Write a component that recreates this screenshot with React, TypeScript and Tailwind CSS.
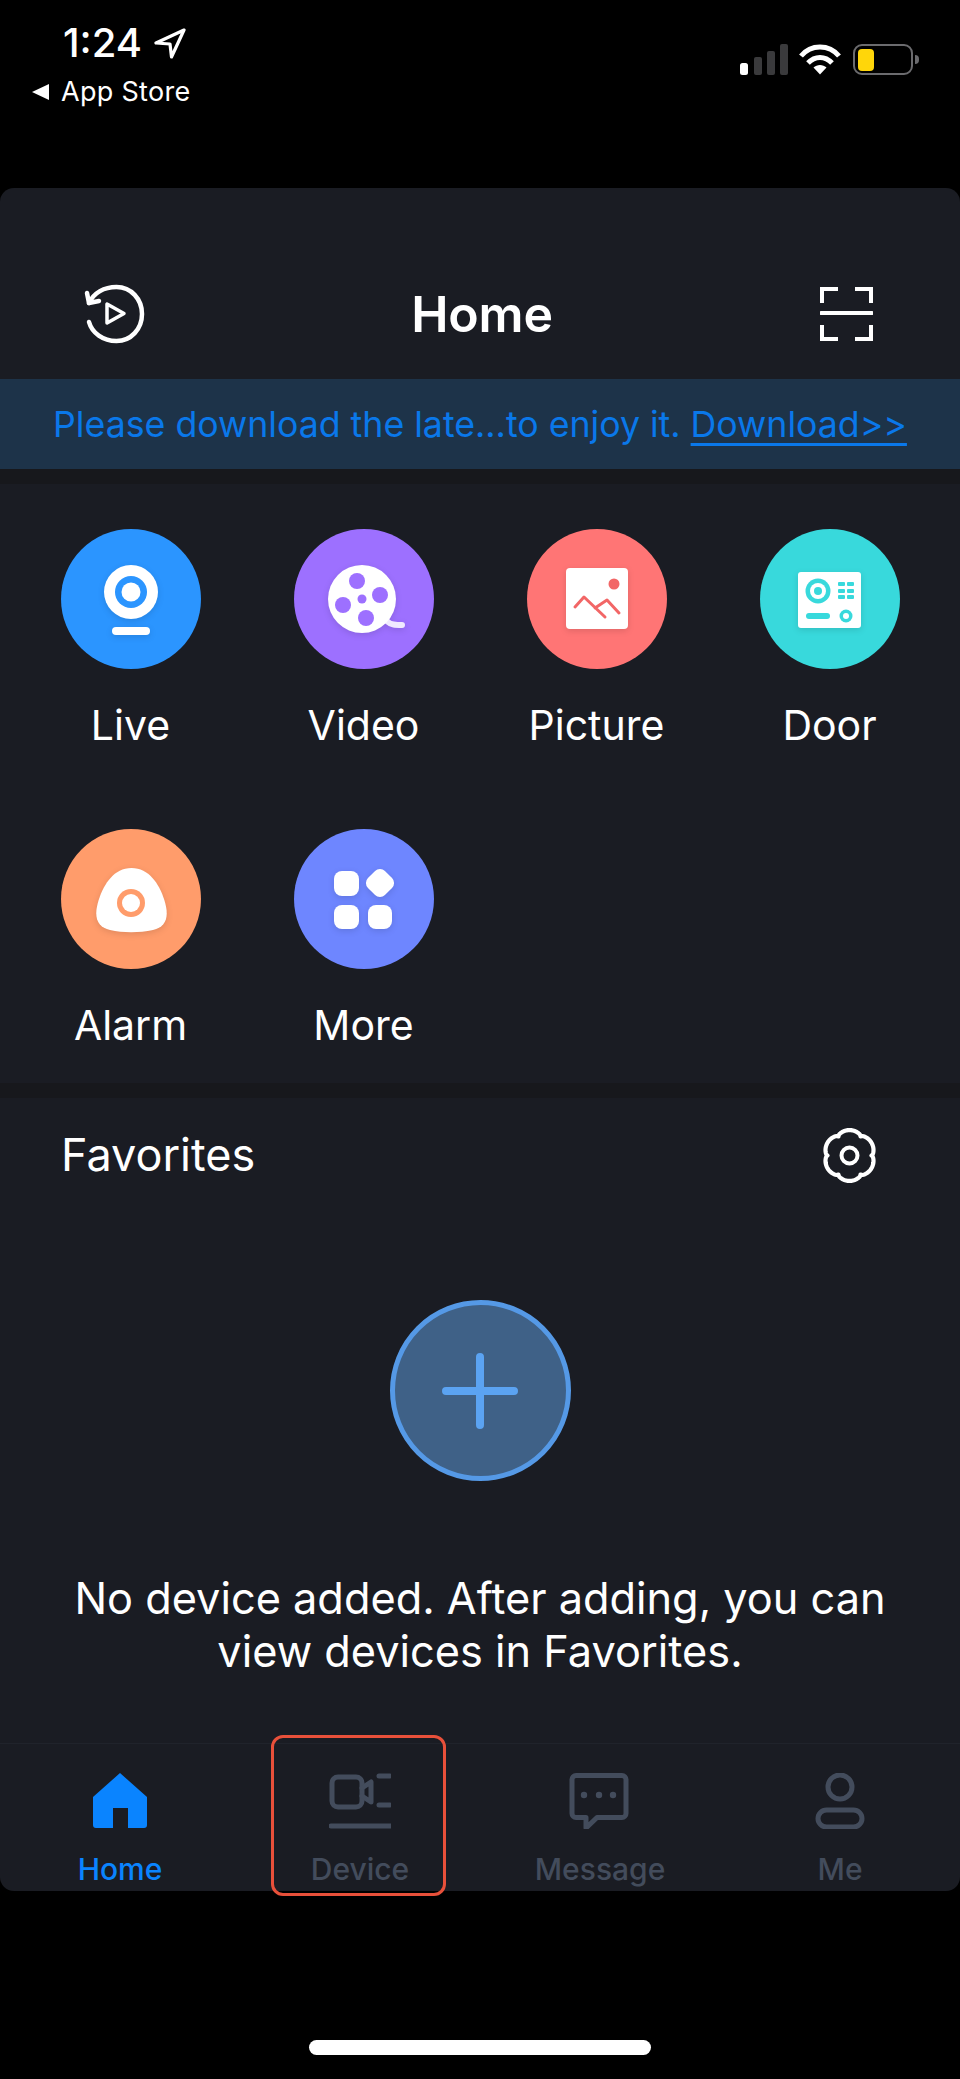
import type { ReactNode } from 'react';

const gearPath = () => {
    const pts: string[] = [];
    for (let i = 0; i < 180; i++) {
        const a = (i / 180) * Math.PI * 2;
        const r = 22 + 3.400 * Math.pow(Math.abs(Math.sin(3 * a)), 0.55);
        pts.push(`${(27.5 + r * Math.cos(a)).toFixed(2)},${(27.5 + r * Math.sin(a)).toFixed(2)}`);
    }
    return `M${pts.join('L')}Z`;
};

function StatusBar() {
    return (
        <div className="h-[188px] flex justify-between items-start text-white">
            <div className="pt-[19px] pl-[32px]">
                <div className="flex items-center pl-[31px] h-[48px]">
                    <span className="text-[40px] font-medium leading-[48px]">1:24</span>
                    <svg width="32" height="31" viewBox="0 0 32 31" className="ml-[12px]" fill="none" stroke="white" strokeWidth="3.200" strokeLinejoin="round">
                        <path d="M30 2 2 15l14 1 1.500 13z" />
                    </svg>
                </div>
                <div className="flex items-center h-[34px] mt-[8px]">
                    <svg width="17" height="16" viewBox="0 0 17 16" fill="white"><path d="M17 0v16L0 8z" /></svg>
                    <span className="ml-[12px] text-[27px] leading-[34px] tracking-[0.3px]">App Store</span>
                </div>
            </div>
            <div className="flex items-start pt-[44px] pr-[41px]">
                <svg width="48" height="31" viewBox="0 0 48 31">
                    <rect x="0" y="19" width="8" height="12" rx="2.500" fill="white" />
                    <rect x="14" y="13" width="8" height="18" rx="2" fill="#3a3a3c" />
                    <rect x="27" y="7" width="8" height="24" rx="2" fill="#3a3a3c" />
                    <rect x="40" y="0" width="8" height="31" rx="2" fill="#3a3a3c" />
                </svg>
                <svg width="42" height="31" viewBox="0 0 42 31" className="ml-[11px]" fill="none" stroke="white" strokeWidth="5">
                    <path d="M2 12C12 0 30 0 40 12" />
                    <path d="M9 19C16 11.500 26 11.500 33 19" />
                    <path d="M21 30.500l-6.500-7c3.500-3.500 9.500-3.500 13 0z" fill="white" stroke="none" />
                </svg>
                <div className="flex items-center ml-[12px]">
                    <div className="w-[60px] h-[31px] rounded-[9px] border-[2.500px] border-[#6b6b6e] p-[2.500px]">
                        <div className="w-[16px] h-full rounded-[4px] bg-[#ffd60a]" />
                    </div>
                    <div className="ml-[2px] w-[4px] h-[9px] rounded-r-full bg-[#6b6b6e]" />
                </div>
            </div>
        </div>
    );
}

function Header() {
    return (
        <div className="h-[191px] flex items-end justify-between pl-[86px] pr-[87px] pb-[36px]">
            <svg width="58" height="58" viewBox="0 0 58 58" fill="none" stroke="white" strokeWidth="4.500" strokeLinecap="round" strokeLinejoin="round" className="overflow-visible">
                <path d="M3 18C8 8 18 2 30.500 2c14.500 0 25.500 12 25.500 27S45 56 30.500 56C17 56 6 48 3 37" />
                <path d="M1 8l2 10 10-2" />
                <path d="M21 19v19l17-9.500z" strokeWidth="3.500" />
            </svg>
            <span className="text-[50px] font-semibold leading-[56px] text-white mb-[1px] tracking-[-0.2px]">Home</span>
            <svg width="53" height="54" viewBox="0 0 53 54" fill="none" stroke="white" strokeWidth="4" className="mb-[2px]">
                <path d="M2 16V2h16M35 2h16v14M2 38v14h16M51 38v14H35" />
                <path d="M1 26h51" strokeLinecap="round" />
            </svg>
        </div>
    );
}

function Banner() {
    return (
        <div className="h-[90px] bg-[#1d3349] flex items-center justify-center text-[#0a78ea] text-[35.700px] leading-[44px] whitespace-nowrap">
            <span>Please download the late...to enjoy it.&nbsp;</span>
            <span className="underline underline-offset-[6px] decoration-[3px]">Download&gt;&gt;</span>
        </div>
    );
}

type Tile = { label: string; color: string; icon: ReactNode };

const tiles: Tile[] = [
    {
        label: 'Live',
        color: 'bg-[#2b95ff]',
        icon: (
            <>
                <circle cx="70" cy="63" r="27" fill="white" />
                <circle cx="70" cy="63" r="16" fill="#2b95ff" />
                <circle cx="70" cy="63" r="9.500" fill="white" />
                <rect x="51" y="98" width="38" height="8" rx="4" fill="white" />
            </>
        ),
    },
    {
        label: 'Video',
        color: 'bg-[#9d70ff]',
        icon: (
            <>
                <path d="M94 93c3 3 7 3 14 3" stroke="#f0eaff" strokeWidth="6" strokeLinecap="round" fill="none" />
                <circle cx="68" cy="70" r="34" fill="white" />
                <circle cx="63" cy="52" r="8" fill="#9d70ff" />
                <circle cx="86" cy="66" r="8" fill="#9d70ff" />
                <circle cx="49" cy="76" r="8" fill="#9d70ff" />
                <circle cx="72" cy="89" r="8" fill="#9d70ff" />
                <circle cx="68" cy="70" r="4.500" fill="#9d70ff" />
            </>
        ),
    },
    {
        label: 'Picture',
        color: 'bg-[#ff7575]',
        icon: (
            <>
                <rect x="39" y="39" width="62" height="61" rx="4" fill="white" />
                <circle cx="87" cy="55" r="5.500" fill="#f26666" />
                <path d="M48 78l9-10 21 20M68 79l12-8 12 13" stroke="#f26666" strokeWidth="3" strokeLinecap="round" strokeLinejoin="round" fill="none" />
            </>
        ),
    },
    {
        label: 'Door',
        color: 'bg-[#38d9dc]',
        icon: (
            <>
                <rect x="38" y="43" width="63" height="56" rx="3" fill="white" />
                <circle cx="58" cy="62" r="12.500" fill="#38d9dc" />
                <circle cx="58" cy="62" r="8" fill="white" />
                <circle cx="58" cy="62" r="4" fill="#38d9dc" />
                <rect x="78" y="53" width="7" height="4" rx="1" fill="#38d9dc" />
                <rect x="87" y="53" width="7" height="4" rx="1" fill="#38d9dc" />
                <rect x="78" y="60" width="7" height="4" rx="1" fill="#38d9dc" />
                <rect x="87" y="60" width="7" height="4" rx="1" fill="#38d9dc" />
                <rect x="78" y="66" width="7" height="4" rx="1" fill="#38d9dc" />
                <rect x="87" y="66" width="7" height="4" rx="1" fill="#38d9dc" />
                <rect x="46" y="84" width="24" height="6" rx="3" fill="#38d9dc" />
                <circle cx="86" cy="87" r="6.500" fill="#38d9dc" />
                <circle cx="86" cy="87" r="3" fill="white" />
            </>
        ),
    },
    {
        label: 'Alarm',
        color: 'bg-[#ff9c6b]',
        icon: (
            <>
                <path d="M70.500 39C88 39 98 55 103 70c6 18 2 28-11 31-14 3-30 3-43 0-13-3-17-13-11-31 5-15 15-31 32.500-31z" fill="white" />
                <circle cx="70" cy="74" r="14" fill="#ff9c6b" />
                <circle cx="70" cy="74" r="9" fill="white" />
            </>
        ),
    },
    {
        label: 'More',
        color: 'bg-[#6e86ff]',
        icon: (
            <>
                <rect x="40" y="42" width="25" height="25" rx="8" fill="white" />
                <rect x="74" y="42" width="24" height="24" rx="7" fill="white" transform="rotate(45 86 54)" />
                <rect x="40" y="76" width="25" height="24" rx="8" fill="white" />
                <rect x="74" y="76" width="24" height="24" rx="8" fill="white" />
            </>
        ),
    },
];

function TileGrid() {
    return (
        <div className="h-[599px] grid grid-cols-4 auto-rows-[300px] px-[14px] pt-[45px]">
            {tiles.map((tile) => (
                <div key={tile.label} className="flex flex-col items-center">
                    <div className={`w-[140px] h-[140px] rounded-full ${tile.color}`}>
                        <svg width="140" height="140" viewBox="0 0 140 140" className="drop-shadow-[0_2px_3px_rgba(0,0,0,0.12)]">{tile.icon}</svg>
                    </div>
                    <span className="mt-[32px] text-[41px] leading-[48px] text-white">{tile.label}</span>
                </div>
            ))}
        </div>
    );
}

function Favorites() {
    return (
        <div className="flex-1 flex flex-col">
            <div className="flex items-center justify-between pl-[61px] pr-[83px] pt-[29px]">
                <span className="text-[45px] leading-[56px] text-white">Favorites</span>
                <svg width="55" height="55" viewBox="0 0 55 55" fill="none" stroke="white" strokeWidth="4.200">
                    <path d={gearPath()} strokeLinejoin="round" />
                    <circle cx="27.500" cy="27.500" r="8" strokeWidth="4" />
                </svg>
            </div>
            <div className="mt-[117px] self-center w-[181px] h-[181px] rounded-full border-[5px] border-[#5599e6] bg-[#3f6187] flex items-center justify-center">
                <svg width="76" height="76" viewBox="0 0 76 76" stroke="#5ba3f2" strokeWidth="8" strokeLinecap="round">
                    <path d="M38 4v68M4 38h68" />
                </svg>
            </div>
            <p className="mt-[91px] text-center text-[43.300px] leading-[53px] text-white">
                No device added. After adding, you can
                <br />
                view devices in Favorites.
            </p>
        </div>
    );
}

const tabStroke = '#434c5c';

function TabBar() {
    const tabs = [
        {
            label: 'Home',
            active: true,
            icon: <path d="M27 0 54 24v28a3 3 0 0 1-3 3H35V35H20v20H3a3 3 0 0 1-3-3V24z" fill="#0a84ff" transform="translate(4 0)" />,
        },
        {
            label: 'Device',
            active: false,
            icon: (
                <g fill="none" stroke={tabStroke} strokeWidth="5" strokeLinecap="round" strokeLinejoin="round">
                    <rect x="3" y="4" width="30" height="30" rx="6" />
                    <path d="M33 15l9-6v20l-9-6" />
                    <path d="M50 3h11M50 32h11M2 53h60" />
                </g>
            ),
        },
        {
            label: 'Message',
            active: false,
            icon: (
                <g>
                    <path d="M7 2.500h46a4 4 0 0 1 4 4v34a4 4 0 0 1-4 4H28L17 55V44.500H7a4 4 0 0 1-4-4v-34a4 4 0 0 1 4-4z" fill="none" stroke={tabStroke} strokeWidth="5" strokeLinejoin="round" />
                    <circle cx="15" cy="22" r="3.200" fill={tabStroke} />
                    <circle cx="30" cy="22" r="3.200" fill={tabStroke} />
                    <circle cx="44" cy="22" r="3.200" fill={tabStroke} />
                </g>
            ),
        },
        {
            label: 'Me',
            active: false,
            icon: (
                <g fill="none" stroke={tabStroke} strokeWidth="5">
                    <circle cx="31" cy="14" r="12" />
                    <rect x="9" y="37" width="44" height="17" rx="8.500" />
                </g>
            ),
        },
    ];

    return (
        <div className="h-[148px] grid grid-cols-4 border-t border-[#20232b] pt-[29px]">
            {tabs.map((tab) => (
                <div key={tab.label} className="flex flex-col items-center">
                    <svg width="62" height="56" viewBox="0 0 62 56">{tab.icon}</svg>
                    <span className={`mt-[22px] text-[30px] leading-[36px] font-medium ${tab.active ? 'text-[#0a84ff]' : 'text-[#434c5c]'}`}>{tab.label}</span>
                </div>
            ))}
        </div>
    );
}

export default function App() {
    return (
        <div className="relative w-[960px] h-[2079px] bg-black flex flex-col [font-family:Inter,sans-serif]">
            <StatusBar />
            <div className="h-[1703px] rounded-[14px] bg-[#1a1c23] flex flex-col overflow-hidden">
                <Header />
                <Banner />
                <div className="h-[15px] bg-[#17181c]" />
                <TileGrid />
                <div className="h-[15px] bg-[#17181c]" />
                <Favorites />
                <TabBar />
            </div>
            <div className="absolute left-[271px] top-[1735px] w-[175px] h-[161px] rounded-[12px] border-[3px] border-[#e8503a]" />
            <div className="mt-[149px] self-center w-[342px] h-[15px] rounded-full bg-white" />
        </div>
    );
}
